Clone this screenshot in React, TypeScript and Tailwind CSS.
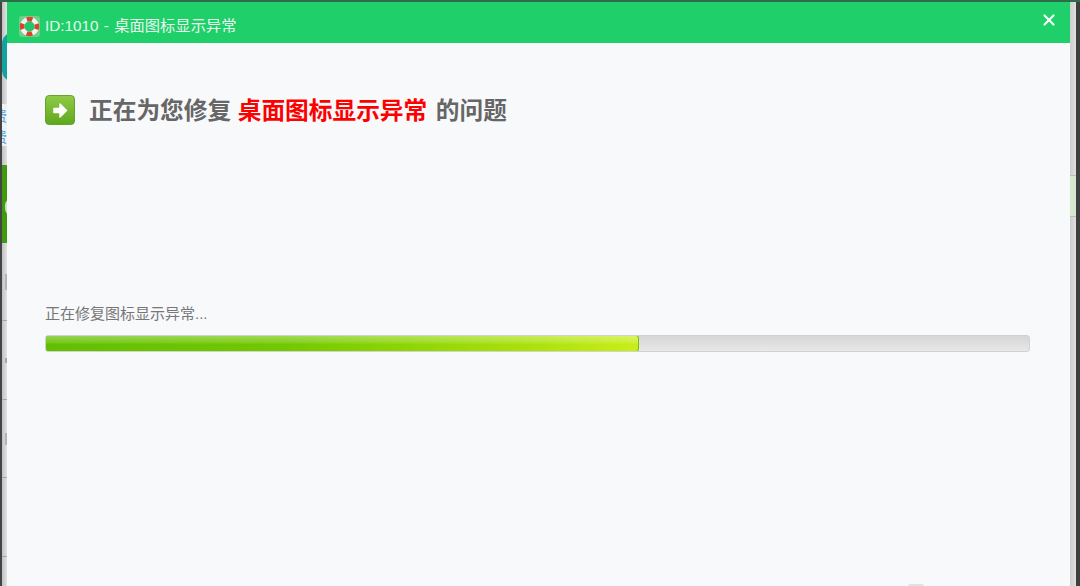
const cjk = "font-['Liberation_Sans','Noto_Sans_CJK_SC',sans-serif]";

function LifeRing() {
  return (
    <svg width="21" height="21" viewBox="0 0 21 21" className="shrink-0">
      <rect width="21" height="21" rx="3" fill="#6fcf8a" />
      <circle cx="10.5" cy="10.500" r="7.400" fill="none" stroke="#f6f1ea" strokeWidth="4.600" />
      <circle cx="10.5" cy="10.500" r="7.400" fill="none" stroke="#d4452c" strokeWidth="4.600" strokeDasharray="5.600 6" strokeDashoffset="2.800" />
      <circle cx="10.5" cy="10.500" r="5" fill="#22c66c" />
    </svg>
  );
}

function ArrowBadge() {
  return (
    <div className="flex h-[30px] w-[30px] shrink-0 items-center justify-center rounded-[4px] border border-[#6aa32a] bg-gradient-to-b from-[#8fca45] to-[#5fa81e]">
      <svg width="17" height="17" viewBox="0 0 17 17">
        <path d="M2 6.500h6V2l6.500 6.500L8 15v-4.500H2z" fill="#fff" stroke="#fff" strokeWidth="1.500" strokeLinejoin="round" />
      </svg>
    </div>
  );
}

function LeftEdge() {
  return (
    <div className="flex w-[7px] shrink-0 bg-[#444]">
      <div className="ml-[2px] flex w-[5px] flex-col overflow-hidden bg-gradient-to-r from-[#c2c2c2] to-[#e2e2e2] pt-[30px]">
        <div className="h-[50px] w-[12px] rounded-l-full bg-[#12a39e]" />
        <div className="mt-[22px] h-[42px] w-[5px] overflow-hidden bg-[#eef1f5]">
          <p className="-ml-[9px] w-[14px] text-[14px] leading-[24px] text-[#5a9fd6]">费</p>
          <p className="-ml-[9px] w-[14px] text-[14px] leading-[18px] text-[#5a9fd6]">费</p>
        </div>
        <div className="relative mt-[19px] h-[78px] bg-[#3f9a10]">
          <div className="absolute left-[3px] top-[34px] h-[16px] w-[6px] rounded-l-full bg-[#cfdcc6]" />
        </div>
        <div className="flex h-[78px] items-center border-b border-[#a9a9a9]">
          <div className="ml-[3px] h-[16px] w-[2px] bg-[#b4b4b4]" />
        </div>
        <div className="flex h-[79px] items-center border-b border-[#a9a9a9]">
          <div className="ml-[3px] h-[5px] w-[2px] bg-[#a8a8a8]" />
        </div>
        <div className="flex h-[78px] items-center border-b border-[#a9a9a9]">
          <div className="ml-[3px] h-[12px] w-[2px] bg-[#b4b4b4]" />
        </div>
        <div className="h-[79px] border-b border-[#a9a9a9]" />
      </div>
    </div>
  );
}

function RightEdge() {
  return (
    <div className="flex w-[10px] shrink-0">
      <div className="flex w-[6px] shrink-0 flex-col bg-gradient-to-r from-[#cdcdcd] to-[#e0e0e0]">
        <div className="mt-[173px] h-[42px] border-y border-[#bdbdbd] bg-[#d5e8cf]" />
      </div>
      <div className="w-[4px] shrink-0 bg-[#3f3f3f]" />
    </div>
  );
}

export default function App() {
  return (
    <div className={`flex h-[586px] w-[1080px] flex-col overflow-hidden bg-[#3f3f3f] ${cjk}`}>
      <div className="h-[2px] shrink-0 bg-[#2f6b4a]" />
      <div className="flex min-h-0 flex-1">
        <LeftEdge />
        <div className="relative flex min-w-0 flex-1 flex-col bg-[#f8f9fb]">
          <div className="flex h-[41px] shrink-0 items-center justify-between bg-[#1fcf69] pl-[12px] pr-[14px] pt-[7px]">
            <div className="flex items-center gap-[5px]">
              <LifeRing />
              <span className="text-[15.300px] text-[#e6f8ec] [word-spacing:1px]">ID:1010&nbsp;- 桌面图标显示异常</span>
            </div>
            <svg width="14" height="14" viewBox="0 0 14 14" className="-translate-y-[6px]">
              <path d="M2.500 2.500l9 9M11.500 2.500l-9 9" stroke="#f2fff6" strokeWidth="2.200" strokeLinecap="round" />
            </svg>
          </div>
          <div className="flex flex-1 flex-col pl-[38px] pr-[40px]">
            <div className="mt-[51px] flex items-center gap-[14px]">
              <ArrowBadge />
              <h1 className="translate-y-[1px] text-[23.700px] font-bold leading-[32px] text-[#666]">
                正在为您修复 <span className="mr-[2px] text-[#fd0000]">桌面图标显示异常</span> 的问题
              </h1>
            </div>
            <p className="mt-[178px] text-[15px] leading-[20px] text-[#777]">正在修复图标显示异常...</p>
            <div className="mt-[11px] h-[17px] w-full overflow-hidden rounded-[3px] border border-[#d2d2d2] bg-gradient-to-b from-[#d6d6d6] to-[#e8e8e8]">
              <div className="-m-px h-[17px] w-[594px] rounded-[3px] border border-[#79bd10] bg-[linear-gradient(to_bottom,rgba(255,255,255,0.32),rgba(255,255,255,0.12)_45%,rgba(0,0,0,0)_55%),linear-gradient(to_right,#62bf00,#72c800_40%,#a8e00c_80%,#c8ee18)]" />
            </div>
          </div>
          <div className="absolute bottom-0 left-[901px] h-[2px] w-[16px] rounded-t-full bg-[#e2e2e2]" />
        </div>
        <RightEdge />
      </div>
    </div>
  );
}
